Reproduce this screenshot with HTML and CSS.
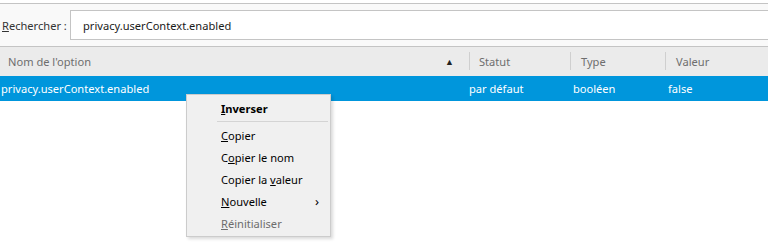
FILE: index.html
```html
<!DOCTYPE html>
<html lang="fr">
<head>
<meta charset="utf-8">
<link rel="stylesheet" href="styles.css">
</head>
<body>
<div class="toolbar">
  <label class="search-label"><span><u>R</u>echercher :</span></label>
  <div class="search-box">privacy.userContext.enabled</div>
</div>
<div class="table">
  <div class="row head">
    <div class="cell c-name">Nom de l'option<span class="sort">&#9650;</span></div>
    <div class="cell c-status sep">Statut</div>
    <div class="cell c-type sep">Type</div>
    <div class="cell c-value sep">Valeur</div>
  </div>
  <div class="row selected">
    <div class="cell c-name">privacy.userContext.enabled</div>
    <div class="cell c-status">par défaut</div>
    <div class="cell c-type">booléen</div>
    <div class="cell c-value">false</div>
  </div>
</div>
<div class="menu">
  <div class="item bold"><span><u>I</u>nverser</span></div>
  <div class="menu-sep"></div>
  <div class="item"><span><u>C</u>opier</span></div>
  <div class="item"><span>C<u>o</u>pier le nom</span></div>
  <div class="item"><span>Copier la <u>v</u>aleur</span></div>
  <div class="item"><span><u>N</u>ouvelle</span><span class="arrow">&#8250;</span></div>
  <div class="item disabled"><span><u>R</u>éinitialiser</span></div>
</div>
</body>
</html>
```
FILE: styles.css
```css
html, body {
  margin: 0;
  padding: 0;
  background: #ffffff;
  font-family: "Noto Sans", "Open Sans", sans-serif;
  font-size: 11.1px;
  color: #1a1a1a;
}
.toolbar {
  margin-top: 3px;
  border-top: 1px solid #c4c4c4;
  border-bottom: 1px solid #c4c4c4;
  background: #f9f9f9;
  padding: 6px 0 6px 2px;
  display: flex;
  align-items: center;
}
.search-label {
  width: 68px;
  color: #333;
  white-space: nowrap;
}
.search-box {
  flex: 1;
  box-sizing: border-box;
  height: 30px;
  border: 1px solid #c4c4c4;
  border-right: none;
  background: #fff;
  padding-left: 12px;
  display: flex;
  align-items: center;
  color: #1a1a1a;
}
.row {
  display: flex;
  align-items: center;
}
.head {
  height: 29px;
  background: #ebebeb;
  color: #6e6e6e;
}
.selected {
  height: 25px;
  background: #0096dc;
  color: #ffffff;
}
.cell {
  box-sizing: border-box;
  height: 100%;
  display: flex;
  align-items: center;
  position: relative;
  white-space: nowrap;
}
.c-name { width: 469px; }
.c-status { width: 101px; }
.c-type { width: 95px; }
.c-value { flex: 1; }
.head .c-name { padding-left: 8px; }
.head .c-status { padding-left: 10px; }
.head .c-type { padding-left: 11px; }
.head .c-value { padding-left: 11px; }
.selected .c-name { padding-left: 1px; }
.selected .c-status { padding-left: 0; }
.selected .c-type { padding-left: 3px; }
.selected .c-value { padding-left: 3px; }
.sep::before {
  content: "";
  position: absolute;
  left: 0;
  top: 5px;
  bottom: 6px;
  border-left: 1px solid #cfcfcf;
}
.sort {
  margin-left: auto;
  margin-right: 15px;
  font-size: 9px;
  color: #222;
}
.menu {
  position: absolute;
  left: 186px;
  top: 94px;
  box-sizing: border-box;
  width: 145px;
  background: #f0f0f0;
  border: 1px solid #cccccc;
  box-shadow: 2px 2px 3px rgba(0,0,0,0.15);
  padding: 2px 2px 2px 2px;
}
.item {
  height: 22px;
  display: flex;
  align-items: center;
  padding-left: 32px;
  color: #000;
  position: relative;
  white-space: nowrap;
}
.item.bold { font-weight: bold; }
.item.disabled { color: #6d6d6d; }
.menu-sep {
  height: 1px;
  background: #d4d4d4;
  margin: 2px 0 2px 28px;
}
.arrow {
  position: absolute;
  left: 126px;
  font-size: 13px;
}
```
